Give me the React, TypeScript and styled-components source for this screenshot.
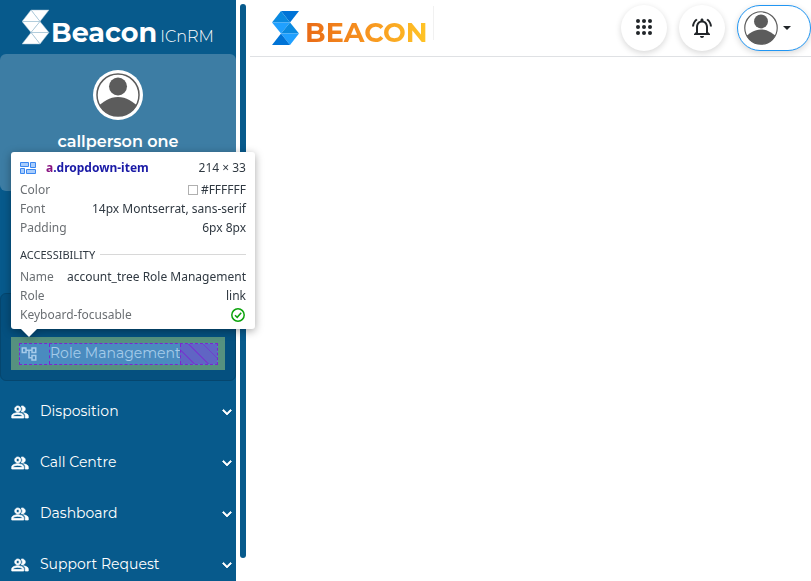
import React from "react";
import styled, { createGlobalStyle } from "styled-components";
import {
  MdExpandMore,
  MdOutlineAccountTree,
  MdOutlineNotificationsActive,
  MdOutlinePeopleAlt,
} from "react-icons/md";

const GlobalStyle = createGlobalStyle`
  * { box-sizing: border-box; }
  body {
    margin: 0;
    background: #fff;
    font-family: Montserrat, Inter, sans-serif;
    font-size: 14px;
  }
  button { font: inherit; color: inherit; border: 0; padding: 0; background: none; cursor: pointer; }
  a { color: inherit; text-decoration: none; }
  svg { display: block; flex: none; }
`;

const Page = styled.div`
  position: relative;
  display: flex;
  height: 100vh;
  overflow: hidden;
`;

const Sidebar = styled.aside`
  flex: none;
  width: 236px;
  overflow: hidden;
  background: #075a8c;
  color: #fff;
`;

const SidebarBrand = styled.a`
  display: flex;
  align-items: center;
  height: 54px;
  padding-left: 22px;
`;

const BrandName = styled.span`
  display: flex;
  align-items: baseline;
  gap: 3px;
  padding-top: 16px;
  margin-left: 1px;
  font-size: 27px;
  line-height: 32px;
  font-weight: 700;
`;

const BrandSuffix = styled.span`
  font-size: 16px;
  font-weight: 300;
`;

const Profile = styled.section`
  display: flex;
  flex-direction: column;
  align-items: center;
  height: 137px;
  padding-top: 16px;
  border-radius: 6px;
  background: #3d7da4;
`;

const ProfilePicture = styled.div`
  display: grid;
  place-items: center;
  width: 50px;
  height: 50px;
  border-radius: 50%;
  background: #fff;
`;

const ProfileName = styled.h2`
  margin: 12px 0 0;
  font-size: 16px;
  line-height: 20px;
  font-weight: 600;
`;

const Nav = styled.nav`
  padding-top: 102px;
`;

const Submenu = styled.div`
  height: 88px;
  margin-bottom: 5px;
  padding: 43px 10px 0;
  border: 1px solid #05466e;
  border-radius: 6px;
  background: #05507f;
`;

const InspectedLink = styled.a`
  display: block;
  padding: 6px 7px 5px 8px;
  background: #56917f;
  color: #a5cbea;
`;

const InspectedContent = styled.span`
  display: flex;
  height: 22px;
  border: 1px dashed #7c25cf;
  background: #4a8bbf;
  line-height: 18px;
  white-space: nowrap;
`;

const InspectedIcon = styled.span`
  width: 30px;
  flex: none;
  padding-top: 1px;
  border-right: 1px dashed #7c25cf;
`;

const InspectedLabel = styled.span`
  width: 130px;
  flex: none;
`;

const FreeSpace = styled.span`
  flex: 1;
  border-left: 1px dashed #7c25cf;
  background: repeating-linear-gradient(45deg, #6065c4 0 9px, #7040cc 9px 10px);
`;

const NavItem = styled.button`
  display: flex;
  align-items: center;
  width: 100%;
  height: 51px;
  padding: 0 0 0 11px;
  text-align: left;

  svg path:not([fill="none"]) {
    stroke: currentColor;
    stroke-width: 1px;
  }
`;

const NavLabel = styled.span`
  flex: 1;
  margin-left: 11px;
  padding-bottom: 1px;
`;

const ScrollTrack = styled.div`
  flex: none;
  width: 14px;
  padding: 4px 4px 23px;
`;

const ScrollThumb = styled.div`
  width: 6px;
  height: 100%;
  border-radius: 3px;
  background: #075a8c;
`;

const Main = styled.main`
  flex: 1;
  min-width: 0;
`;

const Header = styled.header`
  display: flex;
  align-items: center;
  gap: 12px;
  height: 57px;
  padding-left: 22px;
  border-bottom: 1px solid #dfe1e4;
`;

const HeaderBrand = styled.a`
  display: flex;
  align-items: center;
  height: 34px;
  margin: 0 auto 10px 0;
  padding: 10px 5px 0 0;
  border-right: 1px solid #f1f1f1;
`;

const HeaderBrandName = styled.span`
  margin-left: 5px;
  padding-top: 10px;
  font-size: 27px;
  line-height: 32px;
  font-weight: 700;
  background: linear-gradient(90deg, #e96a16, #f79420 50%, #ffc526);
  background-clip: text;
  color: transparent;
`;

const RoundButton = styled.button`
  display: grid;
  place-items: center;
  flex: none;
  width: 46px;
  height: 46px;
  border-radius: 50%;
  background: #fff;
  color: #212529;
  box-shadow: 0 2px 6px rgba(0, 0, 0, 0.16);
`;

const AccountButton = styled.button`
  display: flex;
  align-items: center;
  gap: 5px;
  flex: none;
  width: 74px;
  height: 46px;
  padding-left: 6px;
  border: 1px solid #2196f3;
  border-radius: 23px;
  background: #fff;
  box-shadow: 0 2px 6px rgba(0, 0, 0, 0.16);
`;

const Tooltip = styled.div`
  position: absolute;
  left: 11px;
  top: 152px;
  width: 244px;
  padding: 6px 9px 5px;
  border-radius: 3px;
  background: #fff;
  color: #303942;
  font: 12px/19px "Segoe UI", "Noto Sans", sans-serif;
  filter: drop-shadow(0 2px 4px rgba(0, 0, 0, 0.35));
  &::after {
    content: "";
    position: absolute;
    left: 10px;
    top: 100%;
    border: 8px solid transparent;
    border-top-color: #fff;
    border-bottom: 0;
  }
`;

const TooltipTitle = styled.div`
  display: flex;
  align-items: center;
  height: 22px;
  padding-bottom: 3px;
`;

const ElementName = styled.strong`
  flex: 1;
  margin-left: 9px;
  color: #1a1aa6;
`;

const TagName = styled.span`
  color: #881280;
`;

const Properties = styled.dl`
  margin: 0;
`;

const Property = styled.div`
  display: flex;
  justify-content: space-between;
  height: 19px;
  white-space: nowrap;
`;

const Term = styled.dt`
  color: #6b6f73;
`;

const Value = styled.dd`
  display: flex;
  align-items: center;
  gap: 3px;
  margin: 0;
`;

const Swatch = styled.span`
  width: 10px;
  height: 10px;
  border: 1px solid #b0b0b0;
`;

const SectionTitle = styled.div`
  display: flex;
  align-items: center;
  gap: 5px;
  height: 30px;
  padding-top: 4px;
  font-size: 11px;
  &::after {
    content: "";
    flex: 1;
    height: 1px;
    background: #d8d8d8;
  }
`;

function BrandMark({ colors, line }: { colors: string[]; line: string }) {
  return (
    <svg width="28" height="36" viewBox="0 0 28 36" stroke={line} strokeWidth="0.5" aria-hidden="true">
      <path d="M9 1H27L18 12.5Z" fill={colors[0]} />
      <path d="M9 1L0 12.5H18Z" fill={colors[1]} />
      <path d="M0 12.5H18L9 23.5Z" fill={colors[2]} />
      <path d="M18 12.5L27 23.5H9Z" fill={colors[1]} />
      <path d="M9 23.5H27L18 35Z" fill={colors[2]} />
      <path d="M9 23.5L18 35H0Z" fill={colors[0]} />
    </svg>
  );
}

function Avatar({ size, id }: { size: number; id: string }) {
  return (
    <svg width={size} height={size} viewBox="0 0 44 44" aria-hidden="true">
      <clipPath id={id}>
        <circle cx="22" cy="22" r="21" />
      </clipPath>
      <circle cx="22" cy="22" r="21" fill="#fff" />
      <g clipPath={`url(#${id})`} fill="#5c5c5c">
        <circle cx="22" cy="13.5" r="9" />
        <path d="M0 35C7 29 13 24 22 24S37 29 44 35V44H0Z" />
      </g>
      <circle cx="22" cy="22" r="21" fill="none" stroke="#5c5c5c" strokeWidth="1.5" />
    </svg>
  );
}

function DotsIcon() {
  const steps = [6, 12, 18];
  return (
    <svg width="24" height="24" viewBox="0 0 24 24" fill="currentColor" aria-hidden="true">
      {steps.map((y) => steps.map((x) => <circle key={`${x}-${y}`} cx={x} cy={y - 1} r="2" />))}
    </svg>
  );
}

function GridElementIcon() {
  return (
    <svg width="17" height="12" viewBox="0 0 17 12" fill="#a9cdfc" stroke="#3b87f0" aria-hidden="true">
      <path d="M0.5 0.5H8.5V4.5H0.5ZM10.5 0.5H15.5V5.5H10.5ZM0.5 6.5H4.5V11.5H0.5ZM6.5 7.5H15.5V11.5H6.5Z" />
    </svg>
  );
}

const menu = ["Disposition", "Call Centre", "Dashboard", "Support Request"];

export default function App() {
  return (
    <>
      <GlobalStyle />
      <Page>
        <Sidebar>
          <SidebarBrand href="#">
            <BrandMark colors={["#fff", "#fff", "#fff"]} line="#9dbfd3" />
            <BrandName>
              Beacon<BrandSuffix>ICnRM</BrandSuffix>
            </BrandName>
          </SidebarBrand>
          <Profile>
            <ProfilePicture>
              <Avatar size={44} id="profile-clip" />
            </ProfilePicture>
            <ProfileName>callperson one</ProfileName>
          </Profile>
          <Nav>
            <Submenu>
              <InspectedLink href="#roles">
                <InspectedContent>
                  <InspectedIcon>
                    <MdOutlineAccountTree size={18} />
                  </InspectedIcon>
                  <InspectedLabel>Role Management</InspectedLabel>
                  <FreeSpace />
                </InspectedContent>
              </InspectedLink>
            </Submenu>
            {menu.map((label) => (
              <NavItem key={label} type="button">
                <MdOutlinePeopleAlt size={18} />
                <NavLabel>{label}</NavLabel>
                <MdExpandMore size={18} />
              </NavItem>
            ))}
          </Nav>
        </Sidebar>
        <ScrollTrack>
          <ScrollThumb />
        </ScrollTrack>
        <Main>
          <Header>
            <HeaderBrand href="#">
              <BrandMark colors={["#0073d6", "#0a8ae0", "#20a0ff"]} line="none" />
              <HeaderBrandName>BEACON</HeaderBrandName>
            </HeaderBrand>
            <RoundButton type="button" aria-label="Apps">
              <DotsIcon />
            </RoundButton>
            <RoundButton type="button" aria-label="Notifications">
              <MdOutlineNotificationsActive size={24} />
            </RoundButton>
            <AccountButton type="button" aria-label="Account">
              <Avatar size={34} id="account-clip" />
              <svg width="8" height="4" viewBox="0 0 8 4" aria-hidden="true">
                <path d="M0 0H8L4 4Z" fill="#212529" />
              </svg>
            </AccountButton>
          </Header>
        </Main>
        <Tooltip role="tooltip">
          <TooltipTitle>
            <GridElementIcon />
            <ElementName>
              <TagName>a</TagName>.dropdown-item
            </ElementName>
            <span>214 × 33</span>
          </TooltipTitle>
          <Properties>
            <Property>
              <Term>Color</Term>
              <Value>
                <Swatch />
                #FFFFFF
              </Value>
            </Property>
            <Property>
              <Term>Font</Term>
              <Value>14px Montserrat, sans-serif</Value>
            </Property>
            <Property>
              <Term>Padding</Term>
              <Value>6px 8px</Value>
            </Property>
          </Properties>
          <SectionTitle>ACCESSIBILITY</SectionTitle>
          <Properties>
            <Property>
              <Term>Name</Term>
              <Value>account_tree Role Management</Value>
            </Property>
            <Property>
              <Term>Role</Term>
              <Value>link</Value>
            </Property>
            <Property>
              <Term>Keyboard-focusable</Term>
              <Value>
                <svg width="16" height="16" viewBox="0 0 16 16" fill="none" stroke="#0ba30b" strokeWidth="1.5" role="img" aria-label="Yes">
                  <circle cx="8" cy="8" r="6.2" />
                  <path d="M5 8.2L7.2 10.3L11.2 5.8" />
                </svg>
              </Value>
            </Property>
          </Properties>
        </Tooltip>
      </Page>
    </>
  );
}
